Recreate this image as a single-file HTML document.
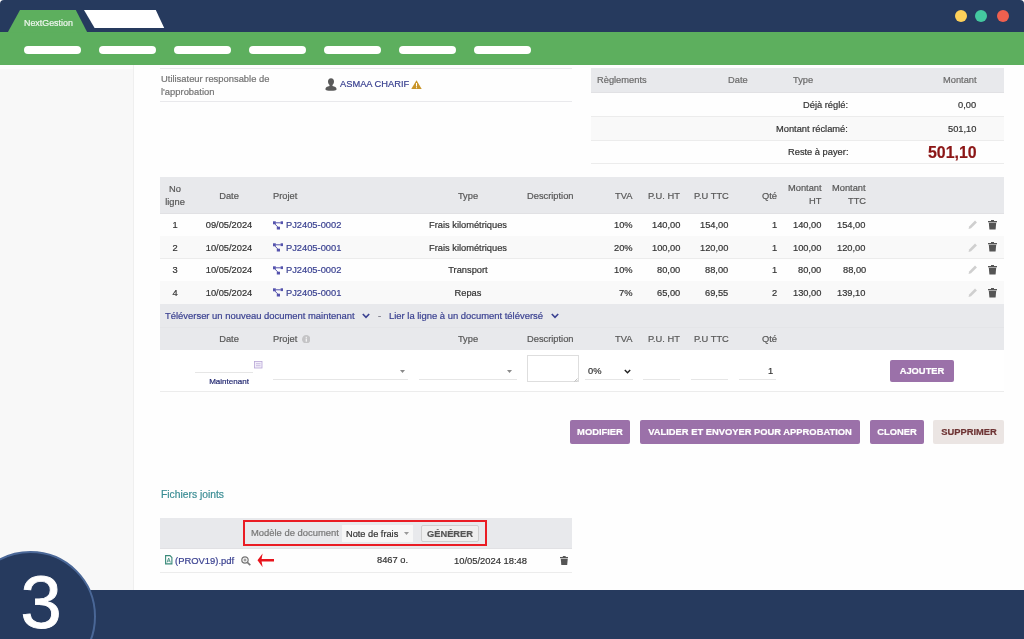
<!DOCTYPE html>
<html><head><meta charset="utf-8"><style>
html,body{margin:0;padding:0;width:1024px;height:639px;overflow:hidden;background:#fff;font-family:"Liberation Sans", sans-serif;}
.t{position:absolute;line-height:1;white-space:nowrap;font-family:"Liberation Sans", sans-serif;will-change:transform;-webkit-text-stroke:0.2px currentColor;}
.r{position:absolute;}
</style></head><body>
<div class="r" style="left:0.00px;top:0.00px;width:1024.00px;height:32.00px;background:#263a5e;"></div>
<div class="r" style="left:0.00px;top:32.00px;width:1024.00px;height:32.60px;background:#5daf5e;"></div>
<div class="r" style="left:0;top:0;width:4px;height:4px;background:#fff"></div>
<div class="r" style="left:0;top:0;width:8px;height:8px;border-top-left-radius:4px;background:#263a5e"></div>
<div class="r" style="left:1020px;top:0;width:4px;height:4px;background:#fff"></div>
<div class="r" style="left:1016px;top:0;width:8px;height:8px;border-top-right-radius:4px;background:#263a5e"></div>
<svg class="r" style="left:0;top:0" width="200" height="40" viewBox="0 0 200 40">
<polygon points="7.8,32.2 20,10 75.8,10 87.2,32.2" fill="#5daf5e"/>
<polygon points="84,10 155.8,10 164.2,28.1 94.6,28.1" fill="#ffffff"/>
</svg>
<div class="t" style="left:24.00px;top:18.77px;font-size:8.9px;color:#eef7ee;font-weight:400;">NextGestion</div>
<div class="r" style="left:23.5px;top:45.8px;width:57px;height:8.2px;border-radius:4.1px;background:#fff"></div>
<div class="r" style="left:98.5px;top:45.8px;width:57px;height:8.2px;border-radius:4.1px;background:#fff"></div>
<div class="r" style="left:173.5px;top:45.8px;width:57px;height:8.2px;border-radius:4.1px;background:#fff"></div>
<div class="r" style="left:248.5px;top:45.8px;width:57px;height:8.2px;border-radius:4.1px;background:#fff"></div>
<div class="r" style="left:323.5px;top:45.8px;width:57px;height:8.2px;border-radius:4.1px;background:#fff"></div>
<div class="r" style="left:398.5px;top:45.8px;width:57px;height:8.2px;border-radius:4.1px;background:#fff"></div>
<div class="r" style="left:473.5px;top:45.8px;width:57px;height:8.2px;border-radius:4.1px;background:#fff"></div>
<div class="r" style="left:954.6px;top:10px;width:12px;height:12px;border-radius:6px;background:#fdd05a"></div>
<div class="r" style="left:975.4px;top:10px;width:12px;height:12px;border-radius:6px;background:#44c8a0"></div>
<div class="r" style="left:996.7px;top:10px;width:12px;height:12px;border-radius:6px;background:#ef604f"></div>
<div class="r" style="left:0.00px;top:64.60px;width:133.00px;height:525.40px;background:#f8f8f8;"></div>
<div class="r" style="left:0.00px;top:64.60px;width:133.00px;height:4.40px;background:#fcfcfc;"></div>
<div class="r" style="left:133.00px;top:64.60px;width:1.00px;height:525.40px;background:#efefef;"></div>
<div class="r" style="left:134.00px;top:64.60px;width:890.00px;height:525.40px;background:#fefefe;"></div>
<div class="r" style="left:160.00px;top:68.00px;width:412.30px;height:1.00px;background:#e9e9ec;"></div>
<div class="r" style="left:160.00px;top:101.00px;width:412.30px;height:1.00px;background:#e9e9ec;"></div>
<div class="t" style="left:161.10px;top:74.34px;font-size:9.4px;color:#737373;font-weight:400;">Utilisateur responsable de</div>
<div class="t" style="left:161.10px;top:87.24px;font-size:9.4px;color:#737373;font-weight:400;">l'approbation</div>
<svg class="r" style="left:325px;top:78px" width="12" height="13" viewBox="0 0 12 13">
<path d="M6 0.3c-2 0-3 1.4-3 3.3 0 1.5 0.6 2.8 1.5 3.5v0.8C2.2 8.3 0.4 9.3 0.4 11.2c0 1.1 2.5 1.6 5.6 1.6s5.6-0.5 5.6-1.6c0-1.9-1.8-2.9-4.1-3.3V7.1C8.4 6.4 9 5.100 9 3.600 9 1.700 8 0.300 6 0.300z" fill="#5a5a5a"/>
</svg>
<div class="t" style="left:339.90px;top:80.43px;font-size:9.3px;color:#3b4291;font-weight:400;">ASMAA CHARIF</div>
<svg class="r" style="left:411.2px;top:79.5px" width="11" height="9.5" viewBox="0 0 11 9.5">
<path d="M5.5 0.2L10.9 9.3H0.1z" fill="#c99529"/>
<rect x="5" y="3" width="1" height="3.5" fill="#fff"/><rect x="5" y="7.2" width="1" height="1" fill="#fff"/>
</svg>
<div class="r" style="left:590.60px;top:67.80px;width:413.00px;height:25.10px;background:#e8e9ec;"></div>
<div class="r" style="left:590.60px;top:92.00px;width:413.00px;height:1.00px;background:#e1e1e4;"></div>
<div class="t" style="left:596.60px;top:76.13px;font-size:9.3px;color:#6b6b6b;font-weight:400;">Règlements</div>
<div class="t" style="left:727.50px;top:76.13px;font-size:9.3px;color:#6b6b6b;font-weight:400;">Date</div>
<div class="t" style="left:793.00px;top:76.13px;font-size:9.3px;color:#6b6b6b;font-weight:400;">Type</div>
<div class="t" style="right:47.50px;top:76.13px;font-size:9.3px;color:#6b6b6b;font-weight:400;">Montant</div>
<div class="r" style="left:590.60px;top:116.30px;width:413.00px;height:23.70px;background:#f9f9f9;"></div>
<div class="r" style="left:590.60px;top:116.00px;width:413.00px;height:1.00px;background:#ececec;"></div>
<div class="r" style="left:590.60px;top:139.50px;width:413.00px;height:1.00px;background:#ececec;"></div>
<div class="r" style="left:590.60px;top:163.00px;width:413.00px;height:1.00px;background:#ececec;"></div>
<div class="t" style="right:175.90px;top:101.23px;font-size:9.3px;color:#333333;font-weight:400;">Déjà réglé:</div>
<div class="t" style="right:47.50px;top:101.23px;font-size:9.3px;color:#333333;font-weight:400;">0,00</div>
<div class="t" style="right:175.90px;top:124.53px;font-size:9.3px;color:#333333;font-weight:400;">Montant réclamé:</div>
<div class="t" style="right:47.50px;top:124.53px;font-size:9.3px;color:#333333;font-weight:400;">501,10</div>
<div class="t" style="right:175.90px;top:148.33px;font-size:9.3px;color:#333333;font-weight:400;">Reste à payer:</div>
<div class="t" style="right:47.50px;top:144.64px;font-size:15.9px;color:#8b1515;font-weight:700;">501,10</div>
<div class="r" style="left:160.00px;top:177.30px;width:843.60px;height:36.20px;background:#e8e9ec;"></div>
<div class="r" style="left:160.00px;top:212.60px;width:843.60px;height:1.00px;background:#e1e1e4;"></div>
<div class="t" style="left:-25.00px;width:400px;text-align:center;top:185.43px;font-size:9.3px;color:#575757;font-weight:400;">No</div>
<div class="t" style="left:-25.00px;width:400px;text-align:center;top:198.13px;font-size:9.3px;color:#575757;font-weight:400;">ligne</div>
<div class="t" style="left:29.00px;width:400px;text-align:center;top:191.83px;font-size:9.3px;color:#575757;font-weight:400;">Date</div>
<div class="t" style="left:273.00px;top:191.83px;font-size:9.3px;color:#575757;font-weight:400;">Projet</div>
<div class="t" style="left:268.00px;width:400px;text-align:center;top:191.83px;font-size:9.3px;color:#575757;font-weight:400;">Type</div>
<div class="t" style="left:527.30px;top:191.83px;font-size:9.3px;color:#575757;font-weight:400;">Description</div>
<div class="t" style="right:391.70px;top:191.83px;font-size:9.3px;color:#575757;font-weight:400;">TVA</div>
<div class="t" style="right:343.90px;top:191.83px;font-size:9.3px;color:#575757;font-weight:400;">P.U. HT</div>
<div class="t" style="right:295.50px;top:191.83px;font-size:9.3px;color:#575757;font-weight:400;">P.U TTC</div>
<div class="t" style="right:247.10px;top:191.83px;font-size:9.3px;color:#575757;font-weight:400;">Qté</div>
<div class="t" style="right:202.50px;top:184.33px;font-size:9.3px;color:#575757;font-weight:400;">Montant</div>
<div class="t" style="right:202.50px;top:197.43px;font-size:9.3px;color:#575757;font-weight:400;">HT</div>
<div class="t" style="right:158.20px;top:184.33px;font-size:9.3px;color:#575757;font-weight:400;">Montant</div>
<div class="t" style="right:158.20px;top:197.43px;font-size:9.3px;color:#575757;font-weight:400;">TTC</div>
<div class="r" style="left:160.00px;top:235.60px;width:843.60px;height:1.00px;background:#ececec;"></div>
<div class="t" style="left:-25.00px;width:400px;text-align:center;top:221.13px;font-size:9.3px;color:#333333;font-weight:400;">1</div>
<div class="t" style="left:29.00px;width:400px;text-align:center;top:221.13px;font-size:9.3px;color:#333333;font-weight:400;">09/05/2024</div>
<svg class="r" style="left:273px;top:220.50px" width="11" height="9" viewBox="0 0 11 9">
<rect x="0" y="0.3" width="2.8" height="3" fill="#5553ad"/><rect x="7.6" y="0.3" width="2.4" height="2.8" fill="#5553ad"/>
<rect x="3.8" y="5.7" width="3.2" height="2.8" fill="#5553ad"/>
<path d="M2.5 1.8H7.8M1.8 3L4.8 5.9" stroke="#5553ad" stroke-width="1" fill="none"/>
</svg>
<div class="t" style="left:286.00px;top:221.13px;font-size:9.3px;color:#3b4291;font-weight:400;">PJ2405-0002</div>
<div class="t" style="left:268.00px;width:400px;text-align:center;top:221.13px;font-size:9.3px;color:#333333;font-weight:400;">Frais kilométriques</div>
<div class="t" style="right:391.70px;top:221.13px;font-size:9.3px;color:#333333;font-weight:400;">10%</div>
<div class="t" style="right:343.90px;top:221.13px;font-size:9.3px;color:#333333;font-weight:400;">140,00</div>
<div class="t" style="right:295.50px;top:221.13px;font-size:9.3px;color:#333333;font-weight:400;">154,00</div>
<div class="t" style="right:247.10px;top:221.13px;font-size:9.3px;color:#333333;font-weight:400;">1</div>
<div class="t" style="right:202.50px;top:221.13px;font-size:9.3px;color:#333333;font-weight:400;">140,00</div>
<div class="t" style="right:158.20px;top:221.13px;font-size:9.3px;color:#333333;font-weight:400;">154,00</div>
<svg class="r" style="left:968px;top:220.00px" width="9.5" height="9.5" viewBox="0 0 10 10">
<path d="M7.4 0.6L9.4 2.6 3.2 8.8 0.6 9.4 1.2 6.8z" fill="#cfcfcf"/>
</svg>
<svg class="r" style="left:987.6px;top:219.70px" width="9" height="10" viewBox="0 0 9 10">
<rect x="0" y="1" width="9" height="1.3" fill="#555"/><rect x="3" y="0" width="3" height="1.2" fill="#555"/>
<path d="M0.8 2.8H8.2L7.6 9.6H1.4z" fill="#555"/>
</svg>
<div class="r" style="left:160.00px;top:236.10px;width:843.60px;height:22.60px;background:#f9f9f9;"></div>
<div class="r" style="left:160.00px;top:258.20px;width:843.60px;height:1.00px;background:#ececec;"></div>
<div class="t" style="left:-25.00px;width:400px;text-align:center;top:243.73px;font-size:9.3px;color:#333333;font-weight:400;">2</div>
<div class="t" style="left:29.00px;width:400px;text-align:center;top:243.73px;font-size:9.3px;color:#333333;font-weight:400;">10/05/2024</div>
<svg class="r" style="left:273px;top:243.10px" width="11" height="9" viewBox="0 0 11 9">
<rect x="0" y="0.3" width="2.8" height="3" fill="#5553ad"/><rect x="7.6" y="0.3" width="2.4" height="2.8" fill="#5553ad"/>
<rect x="3.8" y="5.7" width="3.2" height="2.8" fill="#5553ad"/>
<path d="M2.5 1.8H7.8M1.8 3L4.8 5.9" stroke="#5553ad" stroke-width="1" fill="none"/>
</svg>
<div class="t" style="left:286.00px;top:243.73px;font-size:9.3px;color:#3b4291;font-weight:400;">PJ2405-0001</div>
<div class="t" style="left:268.00px;width:400px;text-align:center;top:243.73px;font-size:9.3px;color:#333333;font-weight:400;">Frais kilométriques</div>
<div class="t" style="right:391.70px;top:243.73px;font-size:9.3px;color:#333333;font-weight:400;">20%</div>
<div class="t" style="right:343.90px;top:243.73px;font-size:9.3px;color:#333333;font-weight:400;">100,00</div>
<div class="t" style="right:295.50px;top:243.73px;font-size:9.3px;color:#333333;font-weight:400;">120,00</div>
<div class="t" style="right:247.10px;top:243.73px;font-size:9.3px;color:#333333;font-weight:400;">1</div>
<div class="t" style="right:202.50px;top:243.73px;font-size:9.3px;color:#333333;font-weight:400;">100,00</div>
<div class="t" style="right:158.20px;top:243.73px;font-size:9.3px;color:#333333;font-weight:400;">120,00</div>
<svg class="r" style="left:968px;top:242.60px" width="9.5" height="9.5" viewBox="0 0 10 10">
<path d="M7.4 0.6L9.4 2.6 3.2 8.8 0.6 9.4 1.2 6.8z" fill="#cfcfcf"/>
</svg>
<svg class="r" style="left:987.6px;top:242.30px" width="9" height="10" viewBox="0 0 9 10">
<rect x="0" y="1" width="9" height="1.3" fill="#555"/><rect x="3" y="0" width="3" height="1.2" fill="#555"/>
<path d="M0.8 2.8H8.2L7.6 9.6H1.4z" fill="#555"/>
</svg>
<div class="r" style="left:160.00px;top:280.80px;width:843.60px;height:1.00px;background:#ececec;"></div>
<div class="t" style="left:-25.00px;width:400px;text-align:center;top:266.33px;font-size:9.3px;color:#333333;font-weight:400;">3</div>
<div class="t" style="left:29.00px;width:400px;text-align:center;top:266.33px;font-size:9.3px;color:#333333;font-weight:400;">10/05/2024</div>
<svg class="r" style="left:273px;top:265.70px" width="11" height="9" viewBox="0 0 11 9">
<rect x="0" y="0.3" width="2.8" height="3" fill="#5553ad"/><rect x="7.6" y="0.3" width="2.4" height="2.8" fill="#5553ad"/>
<rect x="3.8" y="5.7" width="3.2" height="2.8" fill="#5553ad"/>
<path d="M2.5 1.8H7.8M1.8 3L4.8 5.9" stroke="#5553ad" stroke-width="1" fill="none"/>
</svg>
<div class="t" style="left:286.00px;top:266.33px;font-size:9.3px;color:#3b4291;font-weight:400;">PJ2405-0002</div>
<div class="t" style="left:268.00px;width:400px;text-align:center;top:266.33px;font-size:9.3px;color:#333333;font-weight:400;">Transport</div>
<div class="t" style="right:391.70px;top:266.33px;font-size:9.3px;color:#333333;font-weight:400;">10%</div>
<div class="t" style="right:343.90px;top:266.33px;font-size:9.3px;color:#333333;font-weight:400;">80,00</div>
<div class="t" style="right:295.50px;top:266.33px;font-size:9.3px;color:#333333;font-weight:400;">88,00</div>
<div class="t" style="right:247.10px;top:266.33px;font-size:9.3px;color:#333333;font-weight:400;">1</div>
<div class="t" style="right:202.50px;top:266.33px;font-size:9.3px;color:#333333;font-weight:400;">80,00</div>
<div class="t" style="right:158.20px;top:266.33px;font-size:9.3px;color:#333333;font-weight:400;">88,00</div>
<svg class="r" style="left:968px;top:265.20px" width="9.5" height="9.5" viewBox="0 0 10 10">
<path d="M7.4 0.6L9.4 2.6 3.2 8.8 0.6 9.4 1.2 6.8z" fill="#cfcfcf"/>
</svg>
<svg class="r" style="left:987.6px;top:264.90px" width="9" height="10" viewBox="0 0 9 10">
<rect x="0" y="1" width="9" height="1.3" fill="#555"/><rect x="3" y="0" width="3" height="1.2" fill="#555"/>
<path d="M0.8 2.8H8.2L7.6 9.6H1.4z" fill="#555"/>
</svg>
<div class="r" style="left:160.00px;top:281.30px;width:843.60px;height:22.70px;background:#f9f9f9;"></div>
<div class="r" style="left:160.00px;top:303.50px;width:843.60px;height:1.00px;background:#ececec;"></div>
<div class="t" style="left:-25.00px;width:400px;text-align:center;top:288.93px;font-size:9.3px;color:#333333;font-weight:400;">4</div>
<div class="t" style="left:29.00px;width:400px;text-align:center;top:288.93px;font-size:9.3px;color:#333333;font-weight:400;">10/05/2024</div>
<svg class="r" style="left:273px;top:288.30px" width="11" height="9" viewBox="0 0 11 9">
<rect x="0" y="0.3" width="2.8" height="3" fill="#5553ad"/><rect x="7.6" y="0.3" width="2.4" height="2.8" fill="#5553ad"/>
<rect x="3.8" y="5.7" width="3.2" height="2.8" fill="#5553ad"/>
<path d="M2.5 1.8H7.8M1.8 3L4.8 5.9" stroke="#5553ad" stroke-width="1" fill="none"/>
</svg>
<div class="t" style="left:286.00px;top:288.93px;font-size:9.3px;color:#3b4291;font-weight:400;">PJ2405-0001</div>
<div class="t" style="left:268.00px;width:400px;text-align:center;top:288.93px;font-size:9.3px;color:#333333;font-weight:400;">Repas</div>
<div class="t" style="right:391.70px;top:288.93px;font-size:9.3px;color:#333333;font-weight:400;">7%</div>
<div class="t" style="right:343.90px;top:288.93px;font-size:9.3px;color:#333333;font-weight:400;">65,00</div>
<div class="t" style="right:295.50px;top:288.93px;font-size:9.3px;color:#333333;font-weight:400;">69,55</div>
<div class="t" style="right:247.10px;top:288.93px;font-size:9.3px;color:#333333;font-weight:400;">2</div>
<div class="t" style="right:202.50px;top:288.93px;font-size:9.3px;color:#333333;font-weight:400;">130,00</div>
<div class="t" style="right:158.20px;top:288.93px;font-size:9.3px;color:#333333;font-weight:400;">139,10</div>
<svg class="r" style="left:968px;top:287.80px" width="9.5" height="9.5" viewBox="0 0 10 10">
<path d="M7.4 0.6L9.4 2.6 3.2 8.8 0.6 9.4 1.2 6.8z" fill="#cfcfcf"/>
</svg>
<svg class="r" style="left:987.6px;top:287.50px" width="9" height="10" viewBox="0 0 9 10">
<rect x="0" y="1" width="9" height="1.3" fill="#555"/><rect x="3" y="0" width="3" height="1.2" fill="#555"/>
<path d="M0.8 2.8H8.2L7.6 9.6H1.4z" fill="#555"/>
</svg>
<div class="r" style="left:160.00px;top:304.00px;width:843.60px;height:46.00px;background:#e8e9ec;"></div>
<div class="r" style="left:160.00px;top:327.00px;width:843.60px;height:1.00px;background:#e4e5e8;"></div>
<div class="t" style="left:165.30px;top:311.41px;font-size:9.44px;color:#3b4291;font-weight:400;">Téléverser un nouveau document maintenant</div>
<svg class="r" style="left:362px;top:312.7px" width="8" height="6" viewBox="0 0 8 6"><path d="M0.8 1L4 4.4 7.2 1" stroke="#3b4291" stroke-width="1.6" fill="none"/></svg>
<div class="t" style="left:378.00px;top:311.41px;font-size:9.44px;color:#7a7a86;font-weight:400;">-</div>
<div class="t" style="left:388.90px;top:311.41px;font-size:9.44px;color:#3b4291;font-weight:400;">Lier la ligne à un document téléversé</div>
<svg class="r" style="left:550.5px;top:312.7px" width="8" height="6" viewBox="0 0 8 6"><path d="M0.8 1L4 4.4 7.2 1" stroke="#3b4291" stroke-width="1.6" fill="none"/></svg>
<div class="t" style="left:29.00px;width:400px;text-align:center;top:334.83px;font-size:9.3px;color:#575757;font-weight:400;">Date</div>
<div class="t" style="left:273.40px;top:334.83px;font-size:9.3px;color:#575757;font-weight:400;">Projet</div>
<svg class="r" style="left:301.5px;top:334.5px" width="8.5" height="8.5" viewBox="0 0 8 8"><circle cx="4" cy="4" r="4" fill="#c4c4c6"/><rect x="3.5" y="3.3" width="1" height="3" fill="#fff"/><rect x="3.5" y="1.7" width="1" height="1" fill="#fff"/></svg>
<div class="t" style="left:268.00px;width:400px;text-align:center;top:334.83px;font-size:9.3px;color:#575757;font-weight:400;">Type</div>
<div class="t" style="left:527.30px;top:334.83px;font-size:9.3px;color:#575757;font-weight:400;">Description</div>
<div class="t" style="right:391.70px;top:334.83px;font-size:9.3px;color:#575757;font-weight:400;">TVA</div>
<div class="t" style="right:343.90px;top:334.83px;font-size:9.3px;color:#575757;font-weight:400;">P.U. HT</div>
<div class="t" style="right:295.50px;top:334.83px;font-size:9.3px;color:#575757;font-weight:400;">P.U TTC</div>
<div class="t" style="right:247.10px;top:334.83px;font-size:9.3px;color:#575757;font-weight:400;">Qté</div>
<div class="r" style="left:160.00px;top:350.00px;width:843.60px;height:42.00px;background:#ffffff;"></div>
<div class="r" style="left:160.00px;top:391.00px;width:843.60px;height:1.00px;background:#ececec;"></div>
<div class="r" style="left:195.30px;top:372.00px;width:57.40px;height:1.00px;background:#e6e6e6;"></div>
<svg class="r" style="left:254px;top:361.3px" width="8.5" height="7.5" viewBox="0 0 8.5 7.5"><rect x="0.5" y="0.5" width="7.5" height="6.5" fill="#f3effa" stroke="#b7a6d6" stroke-width="0.8"/><path d="M2 2.7H6.5M2 4.7H6.5" stroke="#b7a6d6" stroke-width="0.7"/></svg>
<div class="t" style="left:29.10px;width:400px;text-align:center;top:377.89px;font-size:8.04px;color:#242a72;font-weight:400;">Maintenant</div>
<div class="r" style="left:273.40px;top:379.00px;width:134.60px;height:1.00px;background:#e6e6e6;"></div>
<svg class="r" style="left:399.5px;top:369.5px" width="5" height="3" viewBox="0 0 5 3"><path d="M0 0H5L2.5 3z" fill="#8a8a8a"/></svg>
<div class="r" style="left:419.40px;top:379.00px;width:97.70px;height:1.00px;background:#e6e6e6;"></div>
<svg class="r" style="left:507px;top:369.5px" width="5" height="3" viewBox="0 0 5 3"><path d="M0 0H5L2.5 3z" fill="#8a8a8a"/></svg>
<div class="r" style="left:526.8px;top:355.2px;width:52px;height:27.2px;box-sizing:border-box;border:1px solid #dedede;background:#fff"></div>
<svg class="r" style="left:574px;top:377.5px" width="4" height="4" viewBox="0 0 4 4"><path d="M3.5 0.5L0.5 3.5M3.5 2.2L2.2 3.5" stroke="#9a9a9a" stroke-width="0.6"/></svg>
<div class="t" style="left:588.20px;top:367.23px;font-size:9.3px;color:#333333;font-weight:400;">0%</div>
<svg class="r" style="left:623.5px;top:369px" width="7" height="5" viewBox="0 0 7 5"><path d="M0.8 0.9L3.5 3.8 6.2 0.9" stroke="#222" stroke-width="1.4" fill="none"/></svg>
<div class="r" style="left:585.00px;top:379.40px;width:47.70px;height:1.00px;background:#e6e6e6;"></div>
<div class="r" style="left:643.30px;top:379.00px;width:37.00px;height:1.00px;background:#e6e6e6;"></div>
<div class="r" style="left:691.30px;top:379.00px;width:36.80px;height:1.00px;background:#e6e6e6;"></div>
<div class="r" style="left:739.40px;top:379.00px;width:36.70px;height:1.00px;background:#e6e6e6;"></div>
<div class="t" style="right:250.60px;top:366.83px;font-size:9.3px;color:#333333;font-weight:400;">1</div>
<div class="r" style="left:889.8px;top:359.8px;width:64.5px;height:22px;border-radius:2px;background:#9b71a9"></div>
<div class="t" style="left:722.00px;width:400px;text-align:center;top:367.07px;font-size:9.37px;color:#fff;font-weight:700;">AJOUTER</div>
<div class="r" style="left:570.2px;top:419.6px;width:60.10px;height:24.7px;border-radius:2px;background:#9b71a9"></div>
<div class="t" style="left:400.25px;width:400px;text-align:center;top:428.27px;font-size:9.37px;color:#fff;font-weight:700;">MODIFIER</div>
<div class="r" style="left:640.1px;top:419.6px;width:220.10px;height:24.7px;border-radius:2px;background:#9b71a9"></div>
<div class="t" style="left:550.15px;width:400px;text-align:center;top:428.27px;font-size:9.37px;color:#fff;font-weight:700;">VALIDER ET ENVOYER POUR APPROBATION</div>
<div class="r" style="left:870px;top:419.6px;width:53.60px;height:24.7px;border-radius:2px;background:#9b71a9"></div>
<div class="t" style="left:696.80px;width:400px;text-align:center;top:428.27px;font-size:9.37px;color:#fff;font-weight:700;">CLONER</div>
<div class="r" style="left:933.4px;top:419.6px;width:70.5px;height:24.7px;border-radius:2px;background:#ebe5e3"></div>
<div class="t" style="left:768.60px;width:400px;text-align:center;top:428.27px;font-size:9.37px;color:#6e3434;font-weight:700;">SUPPRIMER</div>
<div class="t" style="left:160.70px;top:490.08px;font-size:10.3px;color:#3b8d94;font-weight:400;">Fichiers joints</div>
<div class="r" style="left:160.00px;top:518.20px;width:412.10px;height:30.40px;background:#e8e9ec;"></div>
<div class="r" style="left:160.00px;top:547.80px;width:412.10px;height:1.00px;background:#e1e1e4;"></div>
<div class="r" style="left:160.00px;top:572.00px;width:412.10px;height:1.00px;background:#ececec;"></div>
<div class="r" style="left:242.8px;top:520.4px;width:244.2px;height:26px;box-sizing:border-box;border:2px solid #ea1c24"></div>
<div class="t" style="left:250.60px;top:528.33px;font-size:9.42px;color:#777;font-weight:400;">Modèle de document</div>
<div class="r" style="left:341.60px;top:525.00px;width:71.00px;height:16.90px;background:#f7f7f7;"></div>
<div class="t" style="left:345.80px;top:530.00px;font-size:9.22px;color:#333333;font-weight:400;">Note de frais</div>
<svg class="r" style="left:404px;top:531.5px" width="5" height="3" viewBox="0 0 5 3"><path d="M0 0H5L2.5 3z" fill="#999"/></svg>
<div class="r" style="left:421.4px;top:525.4px;width:57.3px;height:17px;box-sizing:border-box;border:1px solid #cfcfcf;border-radius:2px;background:#efefef"></div>
<div class="t" style="left:250.00px;width:400px;text-align:center;top:529.73px;font-size:9.3px;color:#555;font-weight:700;">GÉNÉRER</div>
<svg class="r" style="left:165px;top:555px" width="7.5" height="9.5" viewBox="0 0 7.5 9.5"><path d="M0.6 0.6H5L6.9 2.5V8.9H0.6z" fill="none" stroke="#3a8a7a" stroke-width="1.1"/><path d="M2 7.5L3.7 3 5.4 7.5M2.6 6H4.8" stroke="#3a8a7a" stroke-width="0.8" fill="none"/></svg>
<div class="t" style="left:174.80px;top:555.83px;font-size:9.42px;color:#3b4291;font-weight:400;">(PROV19).pdf</div>
<svg class="r" style="left:240.5px;top:556px" width="10" height="9.5" viewBox="0 0 10 9.5"><circle cx="4" cy="4" r="3.2" fill="none" stroke="#777" stroke-width="1.2"/><path d="M6.3 6.3L9.3 9.1" stroke="#777" stroke-width="1.6"/><path d="M2.5 4H5.5M4 2.5V5.5" stroke="#777" stroke-width="0.9"/></svg>
<svg class="r" style="left:256.5px;top:552.5px" width="17.5" height="14.5" viewBox="0 0 17.5 14.5"><path d="M0.5 7.25L5.6 0.4 4.6 6H17V8.5H4.6L5.6 14.1z" fill="#e8141c"/></svg>
<div class="t" style="right:615.50px;top:556.33px;font-size:9.3px;color:#333333;font-weight:400;">8467 o.</div>
<div class="t" style="left:453.70px;top:556.24px;font-size:9.4px;color:#333333;font-weight:400;">10/05/2024 18:48</div>
<svg class="r" style="left:559.7px;top:555.7px" width="8.5" height="9.5" viewBox="0 0 9 10"><rect x="0" y="1" width="9" height="1.3" fill="#555"/><rect x="3" y="0" width="3" height="1.2" fill="#555"/><path d="M0.8 2.8H8.2L7.6 9.6H1.4z" fill="#555"/></svg>
<div class="r" style="left:0.00px;top:590.00px;width:1024.00px;height:49.00px;background:#263a5e;"></div>
<div class="r" style="left:-35.5px;top:550.5px;width:131px;height:131px;box-sizing:border-box;border-radius:50%;border:2.6px solid #4a6797;background:#263a5e"></div>
<div class="t" style="left:-159.00px;width:400px;text-align:center;top:566.46px;font-size:74px;color:#ffffff;font-weight:400;-webkit-text-stroke:0.9px #fff;">3</div>
</body></html>
